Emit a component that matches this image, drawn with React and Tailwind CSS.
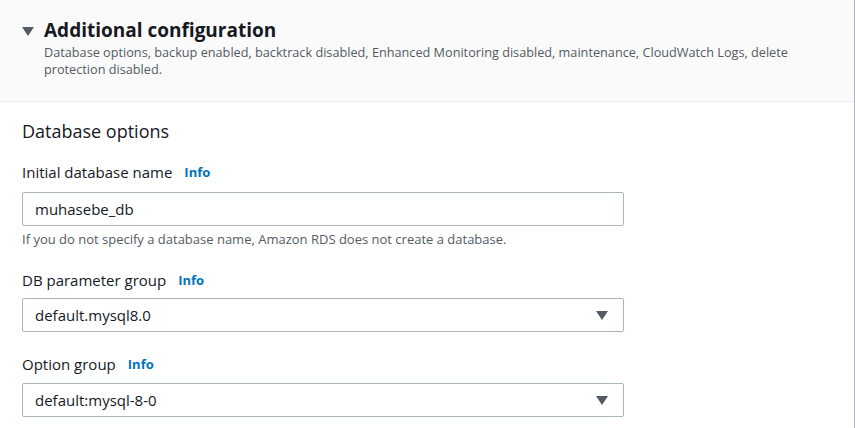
import React from "react"

function Info() {
  return (
    <span className="ml-[12px] text-[13px] font-bold text-[#0073bb]">
      Info
    </span>
  )
}

function Caret() {
  return (
    <svg
      width="12"
      height="9"
      viewBox="0 0 12 9"
      className="shrink-0"
    >
      <polygon points="0,0 12,0 6,9" fill="#545b64" />
    </svg>
  )
}

function Field({ label, value, hint, select, gap }) {
  return (
    <div>
      <div className="flex items-center text-[15px] leading-[20px] text-[#16191f]">
        {label}
        <Info />
      </div>

      <div
        className={
          (gap === "sm" ? "mt-[8px] " : gap === "md" ? "mt-[9px] " : "mt-[10px] ") +
          "flex h-[34px] w-[602px] items-center justify-between rounded-[2px] border border-[#aab7b8] bg-white pl-[12px] pr-[15px] text-[15px] text-[#16191f]"
        }
      >
        <span>{value}</span>
        {select && <Caret />}
      </div>

      {hint && (
        <p className="mt-[5px] text-[13px] leading-[16px] text-[#545b64]">
          {hint}
        </p>
      )}
    </div>
  )
}

export default function App() {
  return (
    <div
      className="h-[428px] w-[855px] overflow-hidden bg-white"
      style={{ fontFamily: '"Open Sans", "Noto Sans", sans-serif' }}
    >
      <div className="h-full border-r border-[#aab7b8]">

        {/* HEADER */}
        <div className="flex h-[102px] border-b border-[#eaeded] bg-[#fafafa] pl-[22px] pt-[17px]">
          <div className="pt-[10px]">
            <Caret />
          </div>

          <div className="ml-[10px]">
            <h1 className="text-[19px] font-bold leading-[26px] text-[#16191f]">
              Additional configuration
            </h1>

            <p className="mt-[1px] w-[790px] text-[12.7px] leading-[17px] text-[#545b64]">
              Database options, backup enabled, backtrack disabled, Enhanced Monitoring disabled, maintenance, CloudWatch Logs, delete protection disabled.
            </p>
          </div>
        </div>

        {/* BODY */}
        <div className="pl-[22px] pt-[17px]">
          <h2 className="text-[18px] leading-[24px] text-[#16191f]">
            Database options
          </h2>

          <div className="mt-[19px]">
            <Field
              label="Initial database name"
              value="muhasebe_db"
              hint="If you do not specify a database name, Amazon RDS does not create a database."
            />
          </div>

          <div className="mt-[23px]">
            <Field
              label="DB parameter group"
              value="default.mysql8.0"
              select
              gap="sm"
            />
          </div>

          <div className="mt-[22px]">
            <Field
              label="Option group"
              value="default:mysql-8-0"
              select
              gap="md"
            />
          </div>
        </div>

      </div>
    </div>
  )
}
